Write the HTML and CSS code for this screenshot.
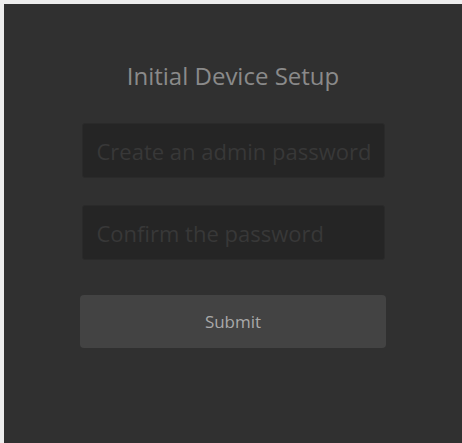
FILE: index.html
```html
<!DOCTYPE html>
<html>
<head>
<meta charset="utf-8">
<link rel="stylesheet" href="styles.css">
</head>
<body>
<main class="panel">
  <h1 class="title">Initial Device Setup</h1>
  <form class="setup-form">
    <input class="field" type="password" placeholder="Create an admin password">
    <input class="field" type="password" placeholder="Confirm the password">
    <button class="submit" type="button">Submit</button>
  </form>
</main>
</body>
</html>
```
FILE: styles.css
```css
html, body {
  margin: 0;
  height: 100%;
}
body {
  background: #ededed;
  padding: 4px 0 0 4px;
  box-sizing: border-box;
  font-family: "Open Sans", "Noto Sans", sans-serif;
}
.panel {
  background: #303030;
  height: 100%;
  display: flex;
  flex-direction: column;
  align-items: center;
  padding-top: 58px;
  box-sizing: border-box;
}
.title {
  margin: 0;
  font-size: 24px;
  font-weight: 400;
  line-height: 28px;
  color: #8a8a8a;
}
.setup-form {
  margin-top: 33px;
  display: flex;
  flex-direction: column;
  align-items: center;
}
.field {
  width: 303px;
  height: 55px;
  box-sizing: border-box;
  background: #252525;
  border: 1px solid #2a2a2a;
  border-radius: 3px;
  padding: 0 14px;
  font-family: "Open Sans", "Noto Sans", sans-serif;
  font-size: 22px;
  color: #777;
  outline: none;
}
.field::placeholder {
  color: #383838;
}
.field + .field {
  margin-top: 27px;
}
.submit {
  margin-top: 35px;
  width: 306px;
  height: 53px;
  background: #434343;
  border: none;
  border-radius: 4px;
  font-family: "Open Sans", "Noto Sans", sans-serif;
  font-size: 17px;
  color: #a9a9a9;
}
```
